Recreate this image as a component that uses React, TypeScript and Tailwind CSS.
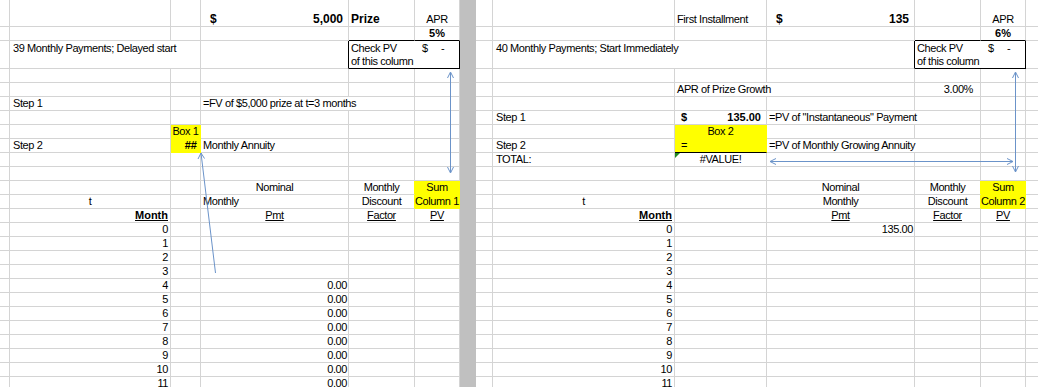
import type { ReactNode } from "react";

const LEFT = "grid grid-cols-[10px_161px_30px_148px_66px_45px]";
const RIGHT = "grid grid-cols-[17px_182px_92px_148px_66px_45px_13px]";

function Cell({ className = "", children }: { className?: string; children?: ReactNode }) {
  return (
    <div
      className={`relative flex items-center whitespace-nowrap border-r border-b border-r-[#d4d4d4] border-b-[#d4d4d4] leading-[13px] ${className}`}
    >
      {children}
    </div>
  );
}

function Empty({ n }: { n: number }) {
  return (
    <>
      {Array.from({ length: n }).map((_, i) => (
        <Cell key={i} />
      ))}
    </>
  );
}

function CheckBox() {
  return (
    <div className="grid grid-cols-[66px_45px] self-stretch pt-[1px]">
      <div className="pl-[2px]">Check PV</div>
      <div className="flex pl-[7px]">
        <span className="w-[19px]">$</span>
        <span>-</span>
      </div>
      <div className="col-span-2 pl-[2px]">of this column</div>
    </div>
  );
}

const months = Array.from({ length: 12 }, (_, i) => i);

function LeftPanel() {
  return (
    <div className="w-[460px] shrink-0">
      <div className={`${LEFT} h-[27px]`}>
        <Empty n={3} />
        <Cell className="items-end justify-between pl-[9px] pr-[5px] text-[12px] font-bold tracking-normal">
          <span>$</span>
          <span>5,000</span>
        </Cell>
        <Cell className="items-end pl-[2px] text-[12px] font-bold tracking-normal">Prize</Cell>
        <Cell className="items-end justify-center">APR</Cell>
      </div>
      <div className={`${LEFT} h-[14px]`}>
        <Empty n={4} />
        <Cell className="border-b-black!" />
        <Cell className="justify-center font-bold tracking-normal border-b-black!">5%</Cell>
      </div>
      <div className={`${LEFT} h-[28px]`}>
        <Cell />
        <Cell className="col-span-2 items-start pl-[3px] pt-[1px]">39 Monthly Payments; Delayed start</Cell>
        <Cell className="border-r-black!" />
        <Cell className="col-span-2 border-r-black! border-b-black!">
          <CheckBox />
        </Cell>
      </div>
      <div className={`${LEFT} h-[14px]`}>
        <Empty n={6} />
      </div>
      <div className={`${LEFT} h-[14px]`}>
        <Empty n={6} />
      </div>
      <div className={`${LEFT} h-[14px]`}>
        <Cell />
        <Cell className="pl-[3px]">Step 1</Cell>
        <Cell />
        <Cell className="col-span-2 pl-[2px]">=FV of $5,000 prize at t=3 months</Cell>
        <Cell />
      </div>
      <div className={`${LEFT} h-[14px]`}>
        <Empty n={6} />
      </div>
      <div className={`${LEFT} h-[14px]`}>
        <Empty n={2} />
        <Cell className="justify-center overflow-visible bg-[#ffff00] border-r-[#ffff00]! border-b-[#ffff00]!">Box 1</Cell>
        <Empty n={3} />
      </div>
      <div className={`${LEFT} h-[14px]`}>
        <Cell />
        <Cell className="pl-[3px]">Step 2</Cell>
        <Cell className="justify-end pr-[3px] bg-[#ffff00] font-bold tracking-normal border-r-[#ffff00]! border-b-[#ffff00]!">##</Cell>
        <Cell className="pl-[2px]">Monthly Annuity</Cell>
        <Empty n={2} />
      </div>
      <div className={`${LEFT} h-[14px]`}>
        <Empty n={6} />
      </div>
      <div className={`${LEFT} h-[14px]`}>
        <Empty n={6} />
      </div>
      <div className={`${LEFT} h-[14px]`}>
        <Empty n={3} />
        <Cell className="justify-center">Nominal</Cell>
        <Cell className="justify-center border-r-[#ffff00]!">Monthly</Cell>
        <Cell className="justify-center bg-[#ffff00] border-r-[#ffff00]! border-b-[#ffff00]!">Sum</Cell>
      </div>
      <div className={`${LEFT} h-[14px]`}>
        <Cell />
        <Cell className="justify-center">t</Cell>
        <Cell />
        <Cell className="pl-[2px]">Monthly</Cell>
        <Cell className="justify-center border-r-[#ffff00]!">Discount</Cell>
        <Cell className="justify-center bg-[#ffff00] border-r-[#ffff00]! border-b-[#ffff00]!">Column 1</Cell>
      </div>
      <div className={`${LEFT} h-[14px]`}>
        <Cell />
        <Cell className="justify-end pr-[2px] font-bold tracking-normal underline">Month</Cell>
        <Cell />
        <Cell className="justify-center underline">Pmt</Cell>
        <Cell className="justify-center underline">Factor</Cell>
        <Cell className="justify-center underline">PV</Cell>
      </div>
      {months.map((m) => (
        <div key={m} className={`${LEFT} h-[14px]`}>
          <Cell />
          <Cell className="justify-end pr-[2px]">{m}</Cell>
          <Cell />
          <Cell className="justify-end pr-[1px]">{m >= 4 ? "0.00" : ""}</Cell>
          <Empty n={2} />
        </div>
      ))}
    </div>
  );
}

function RightPanel() {
  return (
    <div className="w-[563px] shrink-0">
      <div className={`${RIGHT} h-[27px]`}>
        <Empty n={2} />
        <Cell className="items-end pl-[2px]">First Installment</Cell>
        <Cell className="items-end justify-between pl-[9px] pr-[5px] text-[12px] font-bold tracking-normal">
          <span>$</span>
          <span>135</span>
        </Cell>
        <Cell />
        <Cell className="items-end justify-center">APR</Cell>
        <Cell />
      </div>
      <div className={`${RIGHT} h-[14px]`}>
        <Empty n={4} />
        <Cell className="border-b-black!" />
        <Cell className="justify-center font-bold tracking-normal border-b-black!">6%</Cell>
        <Cell />
      </div>
      <div className={`${RIGHT} h-[28px]`}>
        <Cell />
        <Cell className="col-span-2 items-start pl-[3px] pt-[1px]">40 Monthly Payments; Start Immediately</Cell>
        <Cell className="border-r-black!" />
        <Cell className="col-span-2 border-r-black! border-b-black!">
          <CheckBox />
        </Cell>
        <Cell />
      </div>
      <div className={`${RIGHT} h-[14px]`}>
        <Empty n={7} />
      </div>
      <div className={`${RIGHT} h-[14px]`}>
        <Empty n={2} />
        <Cell className="col-span-2 pl-[2px]">APR of Prize Growth</Cell>
        <Cell className="justify-end pr-[7px]">3.00%</Cell>
        <Empty n={2} />
      </div>
      <div className={`${RIGHT} h-[14px]`}>
        <Empty n={7} />
      </div>
      <div className={`${RIGHT} h-[14px]`}>
        <Cell />
        <Cell className="pl-[3px]">Step 1</Cell>
        <Cell className="justify-between pl-[6px] pr-[5px] font-bold tracking-normal">
          <span>$</span>
          <span>135.00</span>
        </Cell>
        <Cell className="col-span-2 pl-[2px]">=PV of "Instantaneous" Payment</Cell>
        <Empty n={2} />
      </div>
      <div className={`${RIGHT} h-[14px]`}>
        <Empty n={2} />
        <Cell className="justify-center bg-[#ffff00] border-r-[#ffff00]! border-b-[#ffff00]!">Box 2</Cell>
        <Empty n={4} />
      </div>
      <div className={`${RIGHT} h-[14px]`}>
        <Cell />
        <Cell className="pl-[3px]">Step 2</Cell>
        <Cell className="pl-[6px] bg-[#ffff00] border-r-[#ffff00]! border-b-black!">=</Cell>
        <Cell className="col-span-2 pl-[2px]">=PV of Monthly Growing Annuity</Cell>
        <Empty n={2} />
      </div>
      <div className={`${RIGHT} h-[14px]`}>
        <Cell />
        <Cell className="pl-[3px]">TOTAL:</Cell>
        <Cell className="justify-center">
          <span className="absolute left-0 top-0 h-0 w-0 border-t-[5px] border-r-[5px] border-t-[#208a20] border-r-transparent" />
          #VALUE!
        </Cell>
        <Empty n={4} />
      </div>
      <div className={`${RIGHT} h-[14px]`}>
        <Empty n={7} />
      </div>
      <div className={`${RIGHT} h-[14px]`}>
        <Empty n={3} />
        <Cell className="justify-center">Nominal</Cell>
        <Cell className="justify-center border-r-[#ffff00]!">Monthly</Cell>
        <Cell className="justify-center bg-[#ffff00] border-r-[#ffff00]! border-b-[#ffff00]!">Sum</Cell>
        <Cell />
      </div>
      <div className={`${RIGHT} h-[14px]`}>
        <Cell />
        <Cell className="justify-center">t</Cell>
        <Cell />
        <Cell className="justify-center">Monthly</Cell>
        <Cell className="justify-center border-r-[#ffff00]!">Discount</Cell>
        <Cell className="justify-center bg-[#ffff00] border-r-[#ffff00]! border-b-[#ffff00]!">Column 2</Cell>
        <Cell />
      </div>
      <div className={`${RIGHT} h-[14px]`}>
        <Cell />
        <Cell className="justify-end pr-[2px] font-bold tracking-normal underline">Month</Cell>
        <Cell />
        <Cell className="justify-center underline">Pmt</Cell>
        <Cell className="justify-center underline">Factor</Cell>
        <Cell className="justify-center underline">PV</Cell>
        <Cell />
      </div>
      {months.map((m) => (
        <div key={m} className={`${RIGHT} h-[14px]`}>
          <Cell />
          <Cell className="justify-end pr-[2px]">{m}</Cell>
          <Cell />
          <Cell className="justify-end pr-[1px]">{m === 0 ? "135.00" : ""}</Cell>
          <Empty n={3} />
        </div>
      ))}
    </div>
  );
}

function Arrows() {
  const c = "#6b93c9";
  return (
    <svg className="pointer-events-none absolute left-0 top-0" width={1038} height={387}>
      <g stroke={c} strokeWidth={1} fill="none">
        {/* Box 1 pointer */}
        <line x1={215.5} y1={273} x2={201} y2={153} />
        <polyline points="198,159 201,153 204.5,158.5" />
        {/* left PV check */}
        <line x1={450.5} y1={73} x2={450.5} y2={172} />
        <polyline points="447.5,78 450.5,72 453.5,78" />
        <polyline points="447.5,167 450.5,173 453.5,167" />
        {/* right PV check */}
        <line x1={1015.5} y1={73} x2={1015.5} y2={172} />
        <polyline points="1012.5,78 1015.5,72 1018.5,78" />
        <polyline points="1012.5,166 1015.5,172 1018.5,166" />
        {/* total link */}
        <line x1={770} y1={161.5} x2={1013} y2={161.5} />
        <polyline points="776,158.5 770,161.5 776,164.5" />
        <polyline points="1007,158.5 1013,161.5 1007,164.5" />
      </g>
    </svg>
  );
}

export default function App() {
  return (
    <div className="relative flex h-[387px] w-[1038px] overflow-hidden bg-white font-['Liberation_Sans',Arial,sans-serif] text-[11px] tracking-[-0.4px] text-black">
      <LeftPanel />
      <div className="w-[16px] shrink-0 bg-[#c0c0c0]" />
      <RightPanel />
      <Arrows />
    </div>
  );
}
